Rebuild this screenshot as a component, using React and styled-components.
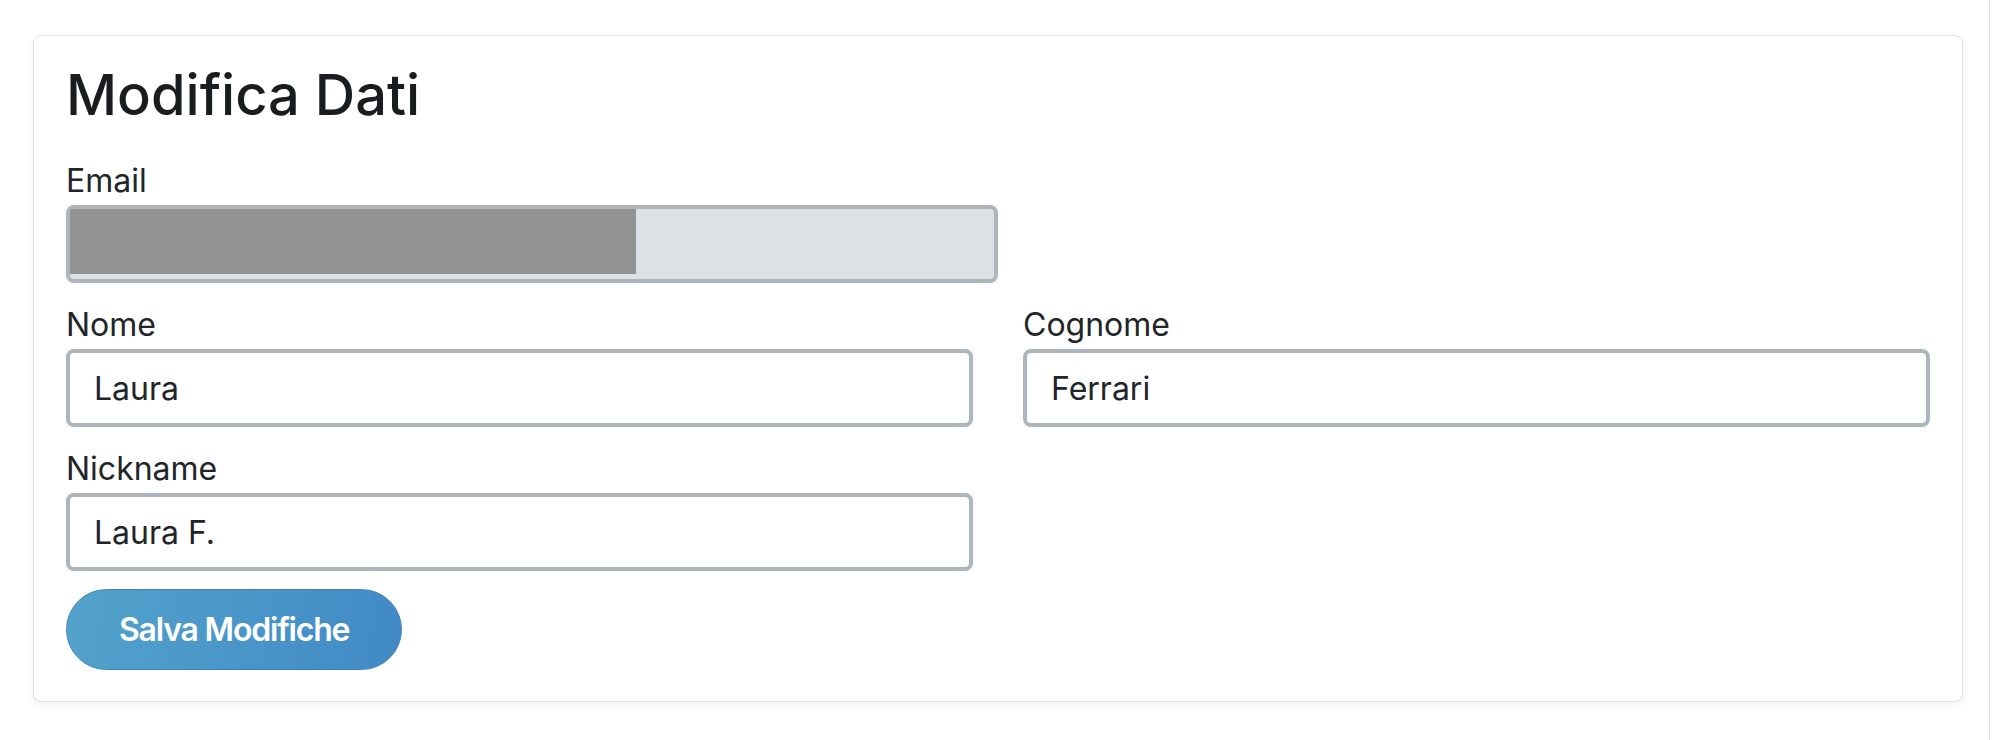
import React from "react";
import styled, { createGlobalStyle } from "styled-components";

const GlobalStyle = createGlobalStyle`
  html, body {
    margin: 0;
    padding: 0;
    background: #ffffff;
  }
  body {
    font-family: Inter, "Noto Sans", "Liberation Sans", sans-serif;
    color: #212529;
  }
`;

const Page = styled.div`
  box-sizing: border-box;
  width: 1990px;
  min-height: 100vh;
  padding: 35px 26px 0 33px;
  border-right: 1px solid #e0e0e0;
`;

const Card = styled.div`
  box-sizing: border-box;
  width: 1930px;
  background: #ffffff;
  border: 1px solid #dfe1e4;
  border-radius: 8px;
  box-shadow: 0 3px 8px rgba(0, 0, 0, 0.06);
  padding: 26px 32px 31px 32px;
`;

const Title = styled.h3`
  margin: 0 0 28px;
  font-size: 56px;
  font-weight: 500;
  line-height: 67px;
  color: #1a1d20;
`;

const Field = styled.div`
  display: flex;
  flex-direction: column;
  width: ${(p) => p.width || "auto"};
`;

const Label = styled.label`
  font-size: 32px;
  line-height: 48px;
  color: #212529;
`;

const Input = styled.input`
  box-sizing: border-box;
  width: 100%;
  height: 78px;
  padding: 11px 24px;
  font-family: inherit;
  font-size: 32px;
  line-height: 48px;
  color: #212529;
  background: #ffffff;
  border: 4px solid #adb5bd;
  border-radius: 8px;
  outline: none;
`;

// email is locked (read-only) and blurred out in the screenshot
const LockedInput = styled.div`
  box-sizing: border-box;
  display: flex;
  align-items: flex-start;
  width: 100%;
  height: 78px;
  background: #dde1e5;
  border: 4px solid #adb5bd;
  border-radius: 8px;
`;

const Redacted = styled.span`
  display: block;
  width: 566px;
  height: 65px;
  background: #939393;
`;

const Form = styled.form`
  display: flex;
  flex-direction: column;
  gap: 18px;
`;

const Row = styled.div`
  display: grid;
  grid-template-columns: 1fr 1fr;
  column-gap: 50px;
`;

const SaveButton = styled.button`
  align-self: flex-start;
  height: 81px;
  padding: 0 52px;
  font-family: inherit;
  font-size: 32px;
  font-weight: 600;
  letter-spacing: -1.2px;
  color: #ffffff;
  background: linear-gradient(100deg, #53a3cb 0%, #4189c6 100%);
  border: 1px solid #3d82c3;
  border-radius: 41px;
  cursor: pointer;
`;

export default function App() {
  return (
    <>
      <GlobalStyle />
      <Page>
        <Card>
          <Title>Modifica Dati</Title>
          <Form onSubmit={(e) => e.preventDefault()}>
            <Field width="50%">
              <Label>Email</Label>
              <LockedInput>
                <Redacted />
              </LockedInput>
            </Field>
            <Row>
              <Field>
                <Label>Nome</Label>
                <Input defaultValue="Laura" />
              </Field>
              <Field>
                <Label>Cognome</Label>
                <Input defaultValue="Ferrari" />
              </Field>
            </Row>
            <Row>
              <Field>
                <Label>Nickname</Label>
                <Input defaultValue="Laura F." />
              </Field>
            </Row>
            <SaveButton type="submit">Salva Modifiche</SaveButton>
          </Form>
        </Card>
      </Page>
    </>
  );
}
